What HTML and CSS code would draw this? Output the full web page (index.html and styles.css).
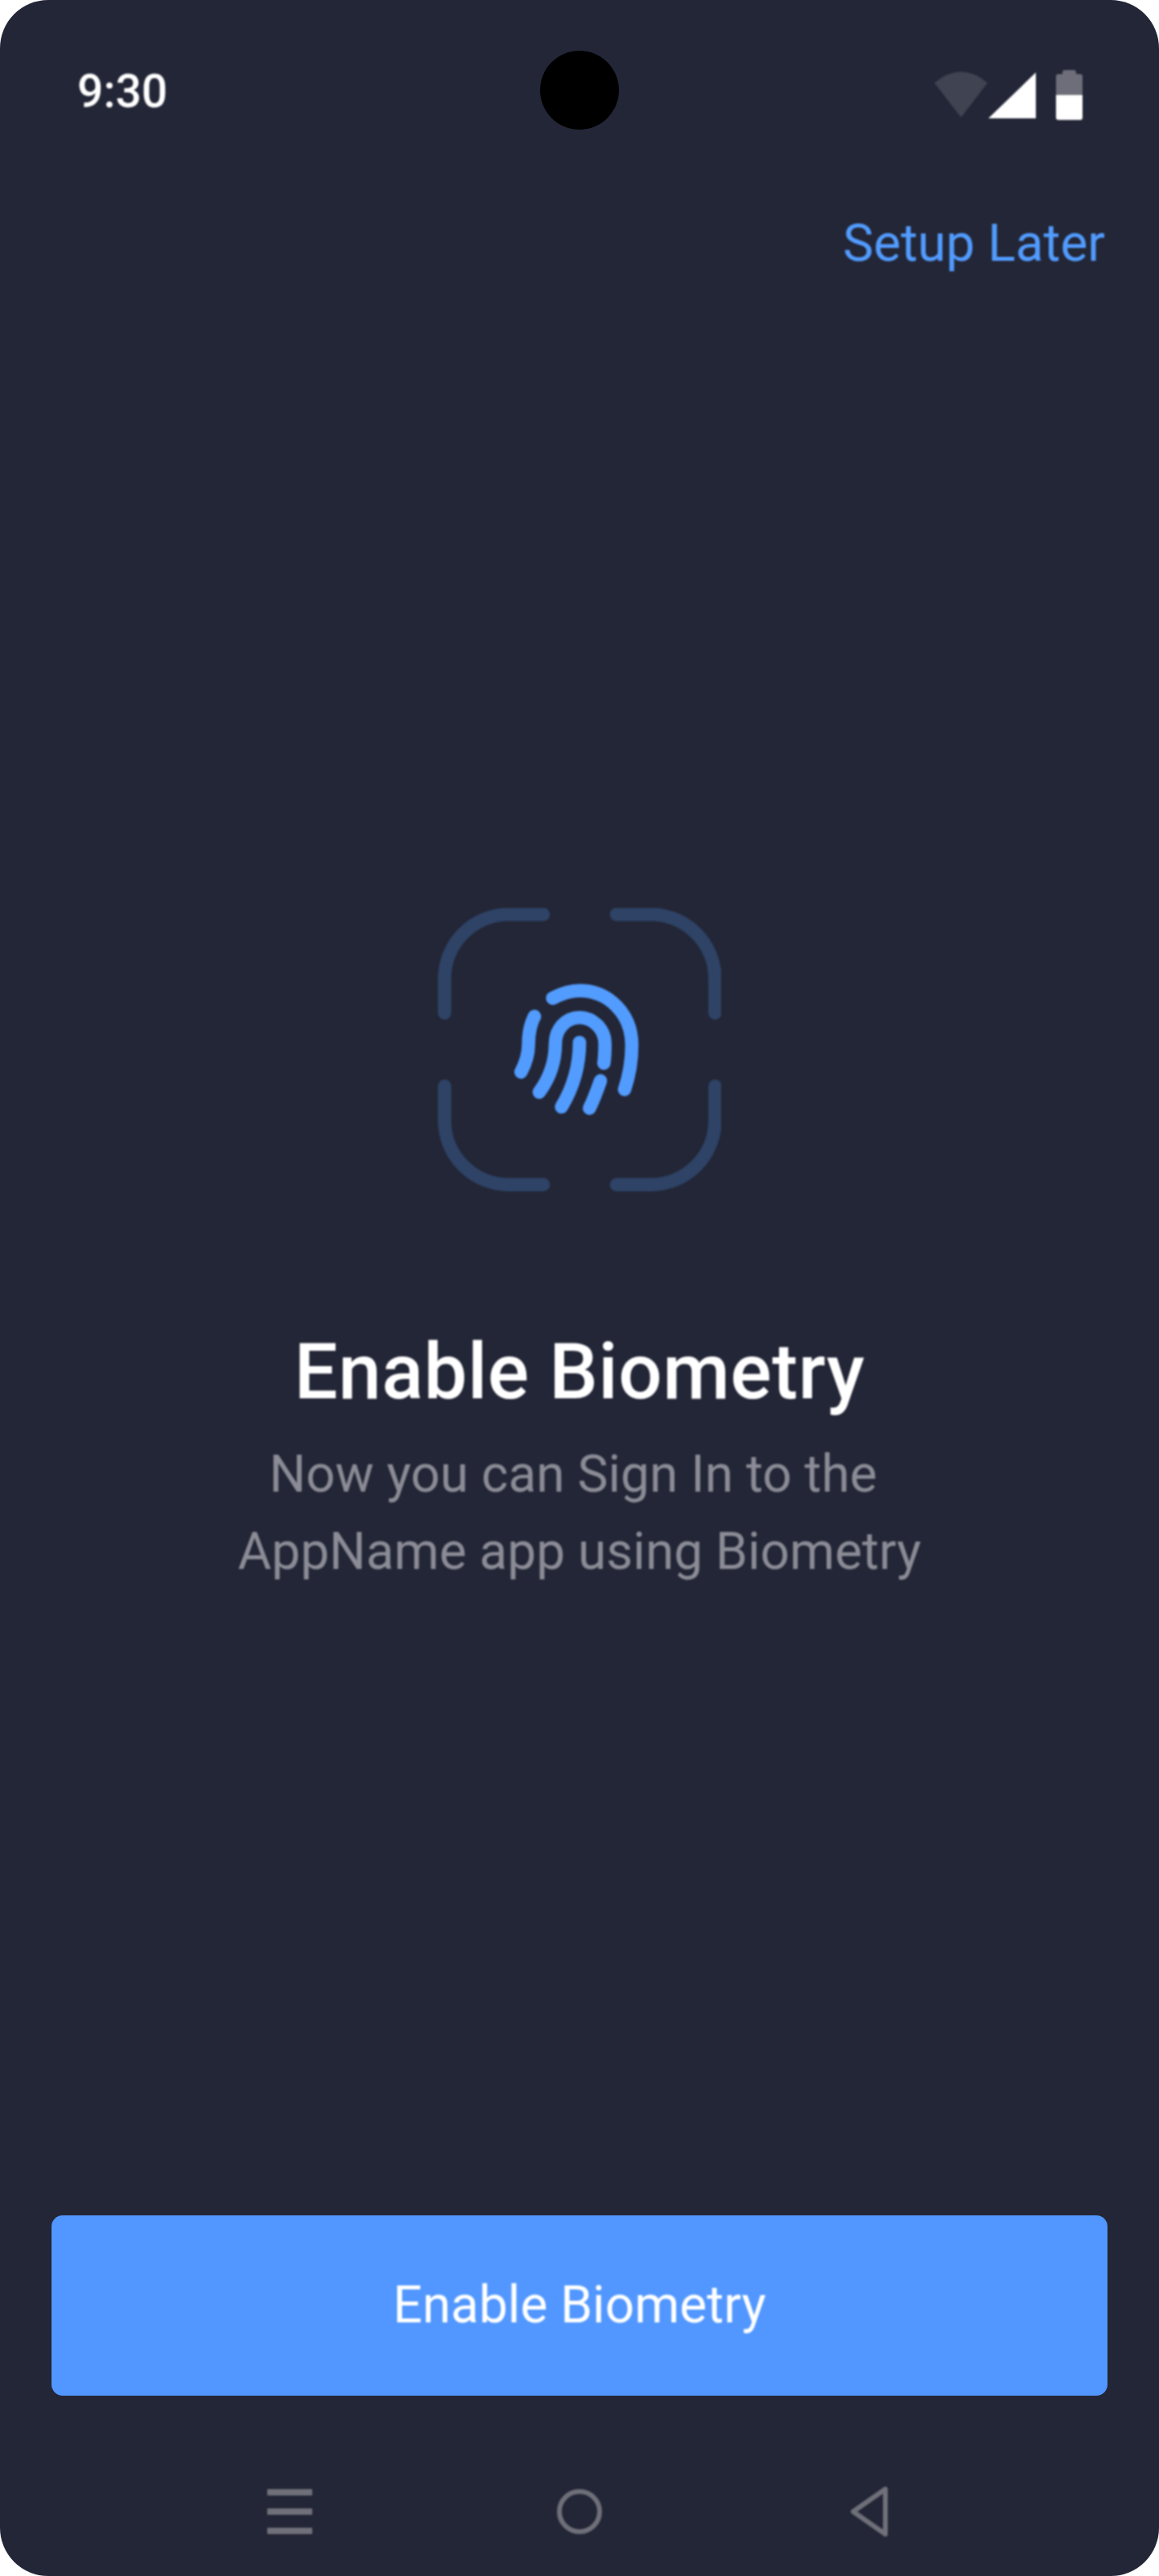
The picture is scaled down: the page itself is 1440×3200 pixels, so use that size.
FILE: index.html
```html
<!DOCTYPE html>
<html lang="en">
<head>
<meta charset="utf-8">
<title>Enable Biometry</title>
<link rel="stylesheet" href="styles.css">
</head>
<body>
<div class="phone">
  <span class="camera"></span>
  <header class="status">
    <span class="time soft">9:30</span>
    <div class="status-icons soft">
      <svg class="icon-wifi" width="68" height="60" viewBox="0 0 68 60"><path d="M1 15 Q34 -13 67 15 L35.500 56 Q34 58 32.500 56 Z" fill="#404351"/></svg>
      <svg class="icon-signal" width="60" height="60" viewBox="-2 0 60 60"><path d="M-2 59 L57 2 V59 Z" fill="#fff"/></svg>
      <svg class="icon-battery" width="33" height="62" viewBox="0 0 33 62">
        <rect x="8" y="0" width="17" height="10" rx="3" fill="#6d6e79"/>
        <rect x="0" y="5" width="33" height="27" rx="3" fill="#6d6e79"/>
        <path d="M0 31 H33 V59 A3 3 0 0 1 30 62 H3 A3 3 0 0 1 0 59 Z" fill="#fff"/>
      </svg>
    </div>
  </header>
  <div class="topbar"><a class="later soft">Setup Later</a></div>
  <main class="content">
    <svg class="biometry-icon soft" width="352" height="352" viewBox="72 84 1056 1056" fill="none" stroke-linecap="round">
      <g stroke="#2e4366" stroke-width="50">
        <path d="M97 475 V348 A240 240 0 0 1 337 108 H465"/>
        <path d="M738 108 H865 A240 240 0 0 1 1105 348 V475"/>
        <path d="M97 748 V875 A240 240 0 0 0 337 1115 H465"/>
        <path d="M738 1115 H865 A240 240 0 0 0 1105 875 V748"/>
      </g>
      <g stroke="#529cff" stroke-width="50">
        <path d="M500 420 C535 402 570 392 600 392 C710 392 795 480 795 595 C795 650 785 710 768 760"/>
        <path d="M450 770 C490 715 510 660 510 590 C510 535 550 492 600 492 C650 492 695 535 695 590 C695 615 694 640 691 662"/>
        <path d="M600 585 C600 680 575 755 533 825"/>
        <path d="M678 728 C665 765 652 800 637 830"/>
        <path d="M432 488 C418 515 410 545 410 590 C410 630 398 665 382 695"/>
      </g>
    </svg>
    <h1 class="title soft">Enable Biometry</h1>
    <p class="subtitle soft">Now you can Sign In to the&nbsp;<br>AppName app using Biometry</p>
  </main>
  <div class="actions"><button class="primary"><span class="soft">Enable Biometry</span></button></div>
  <nav class="navbar soft">
    <span class="nav-item"><span class="menu-icon"><i></i><i></i><i></i></span></span>
    <span class="nav-item"><span class="home-icon"></span></span>
    <span class="nav-item">
      <svg width="48" height="64" viewBox="0 0 48 64"><path d="M44 4 V60 L4 32 Z" fill="none" stroke="#6f7079" stroke-width="6" stroke-linejoin="round"/></svg>
    </span>
  </nav>
</div>
</body>
</html>
```
FILE: styles.css
```css
* { box-sizing: border-box; }
html, body { margin: 0; background: #fff; }
body { font-family: Roboto, "Liberation Sans", sans-serif; }

.phone {
  position: relative;
  width: 1440px;
  height: 3200px;
  background: #232636;
  border-radius: 60px;
  overflow: hidden;
  display: flex;
  flex-direction: column;
}

/* the reference is an upscaled capture, so its text and icons are slightly soft */
.soft { filter: blur(1.2px); }

.camera {
  position: absolute;
  left: 671px;
  top: 63px;
  width: 98px;
  height: 98px;
  border-radius: 50%;
  background: #000;
}

.status {
  height: 226px;
  padding: 0 95px 0 96px;
  display: flex;
  justify-content: space-between;
  align-items: center;
}
.time { font-size: 57px; font-weight: 500; color: #fff; }
.status-icons { align-self: flex-start; margin-top: 87px; display: flex; align-items: flex-start; }
.status-icons svg { display: block; }
.icon-wifi { margin-top: 1px; }
.icon-signal { margin: 1px 24px 0 0; }

.topbar { margin-top: 29px; padding: 0 67px 0 64px; display: flex; justify-content: flex-end; }
.later { font-size: 64px; line-height: 96px; color: #529cff; }

.content {
  flex: 1;
  padding-top: 777px;
  display: flex;
  flex-direction: column;
  align-items: center;
  text-align: center;
}
.biometry-icon { display: block; }
.title {
  margin: 160px 0 0;
  font-size: 96px;
  line-height: 128px;
  font-weight: 500;
  letter-spacing: 0.5px;
  color: #fff;
}
.subtitle {
  margin: 16px 0 0;
  font-size: 64px;
  line-height: 96px;
  color: #8b8c96;
}

.actions { padding: 0 64px; }
.primary {
  display: block;
  width: 100%;
  height: 224px;
  padding: 0 0 2px;
  border: 0;
  border-radius: 14px;
  background: #5297ff;
  color: #fff;
  font: 400 64px Roboto, "Liberation Sans", sans-serif;
}
.primary .soft { display: inline-block; }

.navbar {
  height: 224px;
  padding: 113px 180px 0;
  display: grid;
  grid-template-columns: repeat(3, 360px);
  grid-auto-rows: 62px;
}
.nav-item { display: flex; align-items: center; justify-content: center; }
.menu-icon { width: 56px; display: flex; flex-direction: column; gap: 16px; }
.menu-icon i { display: block; height: 8px; border-radius: 1px; background: #6f7079; }
.home-icon { width: 56px; height: 56px; border: 6px solid #6f7079; border-radius: 50%; }
```
